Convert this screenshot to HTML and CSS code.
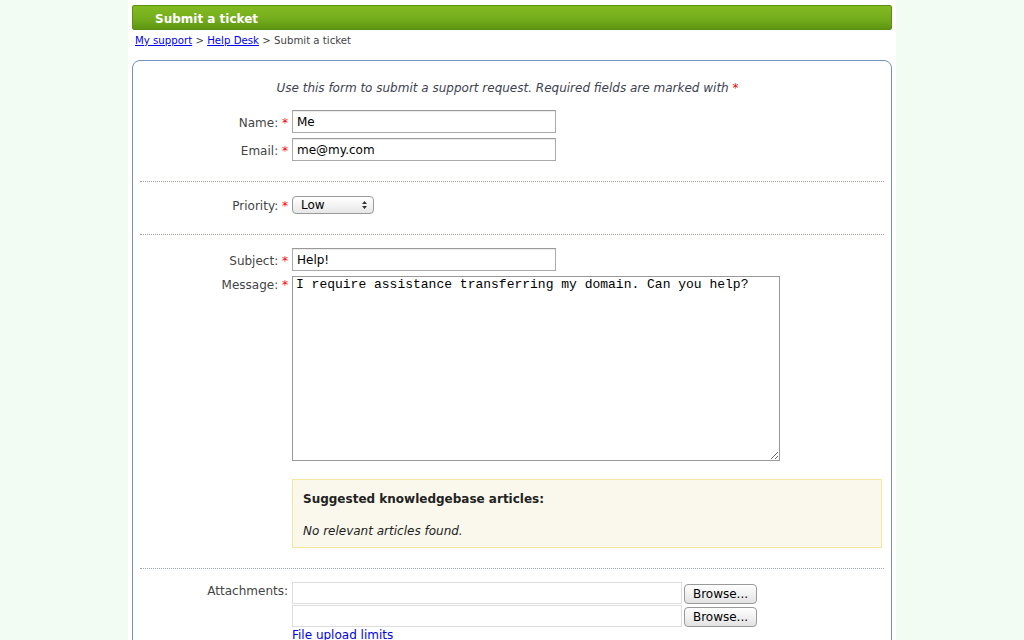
FILE: index.html
```html
<!DOCTYPE html>
<html lang="en">
<head>
    <meta charset="UTF-8">
    <title>Submit a ticket</title>
    <link rel="stylesheet" href="styles.css">
</head>
<body>
    <div class="page">
        <!-- Title bar -->
        <div class="titlebar">Submit a ticket</div>

        <!-- Breadcrumbs -->
        <div class="crumbs">
            <a href="#">My support</a> &gt; <a href="#">Help Desk</a> &gt; Submit a ticket
        </div>

        <!-- Ticket form -->
        <form class="ticketForm">
            <p class="intro">Use this form to submit a support request. Required fields are marked with <span class="req">*</span></p>

            <div class="section first">
                <div class="row">
                    <label>Name: <span class="req">*</span></label>
                    <input class="textInput" type="text" value="Me">
                </div>
                <div class="row">
                    <label>Email: <span class="req">*</span></label>
                    <input class="textInput" type="text" value="me@my.com">
                </div>
            </div>

            <hr class="sep">

            <div class="section priority">
                <div class="row">
                    <label>Priority: <span class="req">*</span></label>
                    <div class="selectWrap">
                        <select class="selectBox">
                            <option>Low</option>
                            <option>Medium</option>
                            <option>High</option>
                        </select>
                        <svg class="selectArrows" width="7" height="10" viewBox="0 0 7 10">
                            <path d="M3.5 1 L6 4 L1 4 Z M3.5 9 L6 6 L1 6 Z" fill="#333"/>
                        </svg>
                    </div>
                </div>
            </div>

            <hr class="sep">

            <div class="section">
                <div class="row">
                    <label>Subject: <span class="req">*</span></label>
                    <input class="textInput" type="text" value="Help!">
                </div>
                <div class="row rowTop">
                    <label>Message: <span class="req">*</span></label>
                    <textarea class="message">I require assistance transferring my domain. Can you help?</textarea>
                </div>
                <div class="row">
                    <span></span>
                    <div class="kbBox">
                        <div class="kbTitle">Suggested knowledgebase articles:</div>
                        <div class="kbEmpty">No relevant articles found.</div>
                    </div>
                </div>
            </div>

            <hr class="sep">

            <div class="section">
                <div class="row rowTop">
                    <label class="attachLabel">Attachments:</label>
                    <div class="attachList">
                        <div class="fileRow">
                            <input class="fileName" type="text" readonly>
                            <button type="button" class="browseBtn">Browse...</button>
                        </div>
                        <div class="fileRow">
                            <input class="fileName" type="text" readonly>
                            <button type="button" class="browseBtn">Browse...</button>
                        </div>
                        <a class="limits" href="#">File upload limits</a>
                    </div>
                </div>
            </div>
        </form>
    </div>
</body>
</html>
```

FILE: styles.css
```css
/* Base */
body {
    margin: 0;
    background-color: #f3fcf3;
    font-family: "DejaVu Sans", Verdana, sans-serif;
    font-size: 12px;
    color: #444;
}

.page {
    width: 760px;
    margin: 0 auto;
    padding: 5px 4px 20px 4px;
    background-color: #fff;
    min-height: 100vh;
}

/* Green title bar */
.titlebar {
    height: 23px;
    line-height: 26px;
    padding-left: 22px;
    border: 1px solid #5b8f14;
    border-radius: 2px;
    background: linear-gradient(to bottom, #82ba21 0%, #75ae1c 55%, #5e9612 100%);
    color: #fff;
    font-weight: bold;
    font-size: 12px;
}

.crumbs {
    margin: 4px 0 0 3px;
    font-size: 10.2px;
    line-height: 14px;
    color: #444;
}

.crumbs a {
    color: #00e;
}

/* Form box */
.ticketForm {
    margin-top: 12px;
    border: 1px solid #7790bf;
    border-radius: 8px;
    padding: 20px 9px 20px 0;
}

.intro {
    margin: 0 0 14px 0;
    text-align: center;
    font-style: italic;
    font-size: 12px;
    line-height: 15px;
    color: #3d4250;
}

.req {
    color: #f00;
    font-style: normal;
}

.section {
    padding: 13px 0 20px 0;
}

.section.first {
    padding-top: 0;
}

.section.priority {
    padding-top: 14px;
}

.sep {
    margin: 0 -2px 0 7px;
    border: none;
    border-top: 1px dotted #97a7bd;
    height: 0;
}

.row {
    display: grid;
    grid-template-columns: 155px 1fr;
    column-gap: 4px;
    align-items: center;
    margin-bottom: 5px;
}

.row:last-child {
    margin-bottom: 0;
}

.rowTop {
    align-items: start;
}

.row label {
    text-align: right;
    color: #444;
    padding-top: 2px;
}

/* Inputs */
.textInput {
    box-sizing: border-box;
    width: 264px;
    height: 23px;
    margin: 0;
    padding: 1px 4px 0 4px;
    border: 1px solid #aaa;
    border-top-color: #999;
    font-family: "DejaVu Sans", Verdana, sans-serif;
    font-size: 12px;
    color: #000;
    box-shadow: inset 0 1px 1px rgba(0, 0, 0, 0.08);
}

.selectWrap {
    position: relative;
    width: 82px;
    height: 18px;
}

.selectBox {
    appearance: none;
    -webkit-appearance: none;
    box-sizing: border-box;
    width: 82px;
    height: 18px;
    margin: 0;
    padding: 0 0 0 8px;
    border: 1px solid #9a9a9a;
    border-radius: 4px;
    background: linear-gradient(to bottom, #ffffff 0%, #f4f4f4 50%, #e6e6e6 100%);
    font-family: "DejaVu Sans", Verdana, sans-serif;
    font-size: 12px;
    color: #000;
}

.selectArrows {
    position: absolute;
    right: 6px;
    top: 4px;
    pointer-events: none;
}

.message {
    box-sizing: border-box;
    width: 488px;
    height: 185px;
    margin: 0;
    padding: 0 3px;
    border: 1px solid #999;
    font-family: "Liberation Mono", "Courier New", monospace;
    font-size: 13px;
    color: #000;
    resize: both;
}

/* Knowledgebase suggestions */
.kbBox {
    margin-top: 13px;
    padding: 11px 10px 8px 10px;
    background-color: #faf8ec;
    border: 1px solid #f5e89c;
    font-size: 12px;
    color: #222;
}

.kbTitle {
    font-weight: bold;
    line-height: 16px;
    margin-bottom: 16px;
}

.kbEmpty {
    font-style: italic;
    line-height: 16px;
}

/* Attachments */
.attachList {
    display: flex;
    flex-direction: column;
    gap: 1px;
}

.fileRow {
    display: flex;
    align-items: flex-end;
    gap: 2px;
}

.fileName {
    box-sizing: border-box;
    width: 390px;
    height: 22px;
    margin: 0;
    border: 1px solid #ddd;
    background: #fff;
}

.browseBtn {
    box-sizing: border-box;
    width: 73px;
    height: 20px;
    margin: 0;
    padding: 0;
    border: 1px solid #999;
    border-radius: 4px;
    background: linear-gradient(to bottom, #ffffff 0%, #f1f1f1 50%, #e2e2e2 100%);
    font-family: "DejaVu Sans", Verdana, sans-serif;
    font-size: 12px;
    color: #000;
}

.limits {
    color: #00e;
    text-decoration: none;
    line-height: 14px;
    margin-top: 0;
}
```
